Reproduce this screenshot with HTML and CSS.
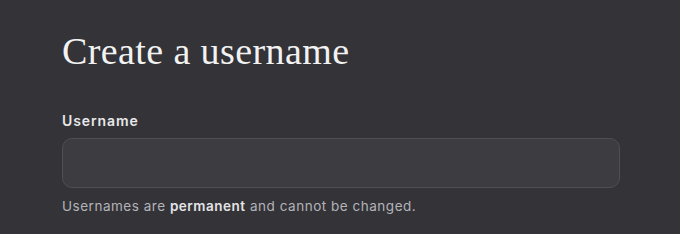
FILE: index.html
```html
<!DOCTYPE html>
<html lang="en">
<head>
  <meta charset="UTF-8">
  <title>Create a username</title>
  <link rel="stylesheet" href="styles.css">
</head>
<body>
  <div class="panel">
    <h1>Create a username</h1>

    <label class="campo-label" for="username">Username</label>
    <input type="text" id="username" class="campo">

    <p class="ayuda">Usernames are <strong>permanent</strong> and cannot be changed.</p>
  </div>
</body>
</html>
```

FILE: styles.css
```css
body {
  margin: 0;
  background: #333338;
  font-family: 'Inter', 'Liberation Sans', sans-serif;
}

.panel {
  padding: 29px 60px 0 62px;
  display: flex;
  flex-direction: column;
}

h1 {
  font-family: 'Liberation Serif', serif;
  font-weight: normal;
  font-size: 38px;
  letter-spacing: 0.4px;
  color: #f2f2f2;
  margin: 0 0 39px;
  line-height: 44px;
}

.campo-label {
  font-size: 14px;
  line-height: 17px;
  letter-spacing: 0.9px;
  font-weight: 600;
  color: #e8e8ea;
  margin-bottom: 9px;
}

.campo {
  height: 50px;
  box-sizing: border-box;
  width: 558px;
  background: #3c3c41;
  border: 1px solid #4e4e54;
  border-radius: 10px;
}

.ayuda {
  margin: 10px 0 0;
  font-size: 13.5px;
  line-height: 16px;
  letter-spacing: 0.52px;
  color: #b4b4b8;
}

.ayuda strong {
  color: #e4e4e6;
  font-weight: 600;
}
```
